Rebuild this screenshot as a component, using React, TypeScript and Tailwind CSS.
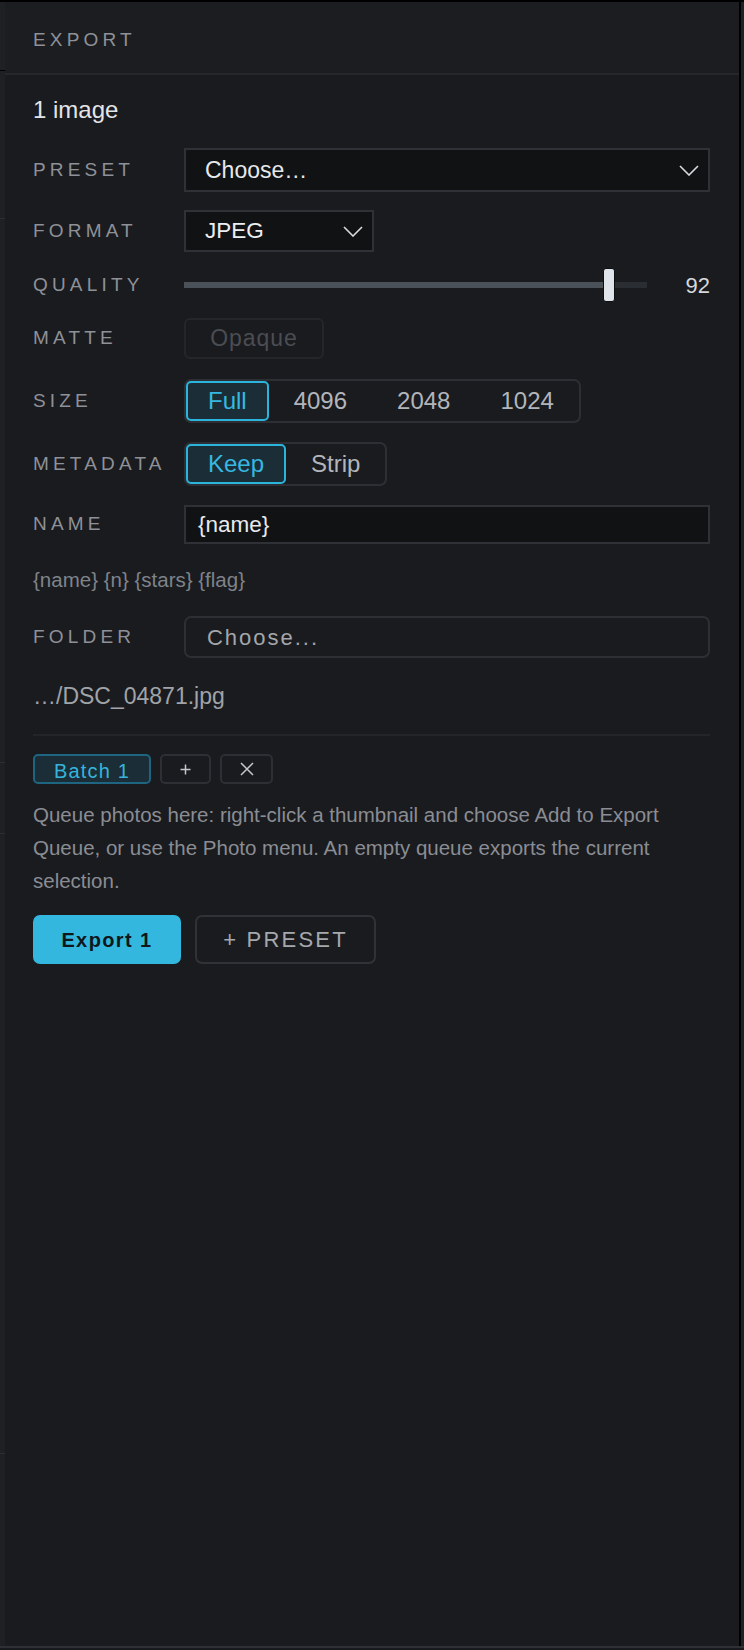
import React from "react";

const font = { fontFamily: '"Liberation Sans", Arial, sans-serif' };

/* ── small pieces ─────────────────────────────────────────── */
function Chevron() {
  return (
    <svg width="20" height="11" viewBox="0 0 20 11" fill="none" className="shrink-0">
      <path d="M1 1 L10 10 L19 1" stroke="#d8dbe0" strokeWidth="1.6" />
    </svg>
  );
}

function Label({ children }: { children: React.ReactNode }) {
  return <span className="text-[19px] uppercase tracking-[0.22em] text-[#8e9197]">{children}</span>;
}

function Row({ label, className = "", children }: { label: string; className?: string; children: React.ReactNode }) {
  return (
    <div className={`grid grid-cols-[151px_1fr] items-center ${className}`}>
      <Label>{label}</Label>
      <div className="flex h-full items-center">{children}</div>
    </div>
  );
}

function Segmented({ items, active }: { items: string[]; active: string }) {
  return (
    <div className="flex h-[44px] rounded-[7px] border-2 border-[#2d2f34]">
      {items.map((it) =>
        it === active ? (
          <button key={it} className="h-[40px] rounded-[5px] border-2 border-[#2bb4dc] bg-[#1b2d36] px-[20px] text-[24px] text-[#36b8e0]">
            {it}
          </button>
        ) : (
          <button key={it} className="h-[40px] border-2 border-transparent px-[23px] text-[24px] text-[#b2b5ba]">
            {it}
          </button>
        )
      )}
    </div>
  );
}

function LeftStrip() {
  return (
    <div className="flex w-[5px] flex-col bg-[#1e2024]">
      <div className="h-[68px]" />
      <div className="h-[1px] bg-black" />
      <div className="h-[147px]" />
      <div className="h-[1px] bg-[#2c2e32]" />
      <div className="h-[543px]" />
      <div className="h-[1px] bg-[#2c2e32]" />
      <div className="h-[70px]" />
      <div className="h-[1px] bg-[#2c2e32]" />
      <div className="h-[619px]" />
      <div className="h-[1px] bg-[#2c2e32]" />
      <div className="flex-1" />
    </div>
  );
}

export default function App() {
  return (
    <div className="flex h-[1650px] w-[744px] flex-col bg-[#18191c]" style={font}>
      <div className="h-[2px] bg-black" />
      <div className="flex min-h-0 flex-1">
        <LeftStrip />

        <main className="flex flex-1 flex-col bg-[#1a1b1f]">
          {/* header */}
          <div className="flex h-[73px] items-center border-b-2 border-[#25272b] bg-[#1c1d21] pl-[28px] pt-[6px]">
            <span className="text-[19px] tracking-[0.22em] text-[#8e9197]">EXPORT</span>
          </div>

          <div className="flex flex-col pl-[28px] pr-[29px]">
            <div className="mt-[21px] text-[24px] leading-[28px] text-[#e3e5e8]">1 image</div>

            <Row label="Preset" className="mt-[24px] h-[44px]">
              <div className="flex h-[44px] w-full items-center justify-between border-2 border-[#2f3136] bg-[#111214] pl-[19px] pr-[9px]">
                <span className="text-[23px] text-[#e6e8eb]">Choose…</span>
                <Chevron />
              </div>
            </Row>

            <Row label="Format" className="mt-[18px] h-[42px]">
              <div className="flex h-[42px] w-[190px] items-center justify-between border-2 border-[#2f3136] bg-[#111214] pl-[19px] pr-[9px]">
                <span className="text-[22.5px] text-[#eceef1]">JPEG</span>
                <Chevron />
              </div>
            </Row>

            <Row label="Quality" className="mt-[16px] h-[34px]">
              <div className="relative flex h-[34px] flex-1 items-center">
                <div className="flex h-[6px] w-full">
                  <div className="h-full w-[91%] bg-[#4a5159]" />
                  <div className="h-full flex-1 bg-[#2a2d31]" />
                </div>
                <div className="absolute left-[calc(91.8%-6px)] top-0 h-[34px] w-[12px] rounded-[3px] border-[1.5px] border-[#0d0e10] bg-[#dfe3ea]" />
              </div>
              <span className="w-[63px] text-right text-[22px] text-[#d6d8dc]">92</span>
            </Row>

            <Row label="Matte" className="mt-[16px] h-[41px]">
              <button className="h-[41px] w-[140px] rounded-[6px] border-2 border-[#24262a] text-[23px] tracking-[0.04em] text-[#4a4d52]">
                Opaque
              </button>
            </Row>

            <Row label="Size" className="mt-[20px] h-[44px]">
              <Segmented items={["Full", "4096", "2048", "1024"]} active="Full" />
            </Row>

            <Row label="Metadata" className="mt-[19px] h-[44px]">
              <Segmented items={["Keep", "Strip"]} active="Keep" />
            </Row>

            <Row label="Name" className="mt-[19px] h-[39px]">
              <div className="flex h-[39px] w-full items-center border-2 border-[#2f3136] bg-[#111214] pl-[12px]">
                <span className="text-[22.5px] text-[#e8eaed]">{"{name}"}</span>
              </div>
            </Row>

            <div className="mt-[24px] text-[20.5px] leading-[24px] text-[#7f838a]">{"{name} {n} {stars} {flag}"}</div>

            <Row label="Folder" className="mt-[24px] h-[42px]">
              <button className="h-[42px] w-full rounded-[7px] border-2 border-[#2d2f34] pl-[21px] text-left text-[22px] tracking-[0.09em] text-[#a3a6ab]">
                Choose...
              </button>
            </Row>

            <div className="mt-[25px] text-[23px] leading-[26px] text-[#a0a3a8]">…/DSC_04871.jpg</div>

            <div className="mt-[25px] h-[2px] bg-[#232529]" />

            {/* queue batches */}
            <div className="mt-[18px] flex h-[30px] gap-[9px]">
              <button className="h-[30px] w-[118px] rounded-[5px] border-2 border-[#1d6580] bg-[#1b2d36] text-[20px] tracking-[0.06em] text-[#36b5dc]">
                Batch 1
              </button>
              <button className="flex h-[30px] w-[51px] items-center justify-center rounded-[5px] border-2 border-[#2d2f34]">
                <svg width="11" height="11" viewBox="0 0 11 11" fill="none">
                  <path d="M5.5 0.5 V10.5 M0.5 5.5 H10.5" stroke="#c5c8cc" strokeWidth="1.5" />
                </svg>
              </button>
              <button className="flex h-[30px] w-[53px] items-center justify-center rounded-[5px] border-2 border-[#2d2f34]">
                <svg width="14" height="14" viewBox="0 0 14 14" fill="none">
                  <path d="M1 1 L13 13 M13 1 L1 13" stroke="#c5c8cc" strokeWidth="1.5" />
                </svg>
              </button>
            </div>

            <p className="mt-[14px] text-[20.5px] leading-[33px] text-[#8a8d93]">
              Queue photos here: right-click a thumbnail and choose Add to Export Queue, or use the Photo menu. An empty queue exports the current selection.
            </p>

            <div className="mt-[18px] flex gap-[14px]">
              <button className="h-[49px] w-[148px] rounded-[7px] bg-[#33b7df] text-[20px] font-bold tracking-[0.07em] text-[#0e171c]">
                Export 1
              </button>
              <button className="h-[49px] w-[181px] rounded-[7px] border-2 border-[#303237] text-[22px] tracking-[0.1em] text-[#a5a8ad]">
                + PRESET
              </button>
            </div>
          </div>
        </main>

        <div className="w-[2px] bg-black" />
        <div className="w-[3px] bg-[#1b2326]" />
      </div>
      <div className="h-[2px] bg-[#2e3035]" />
      <div className="h-[2px] bg-[#18191c]" />
    </div>
  );
}
